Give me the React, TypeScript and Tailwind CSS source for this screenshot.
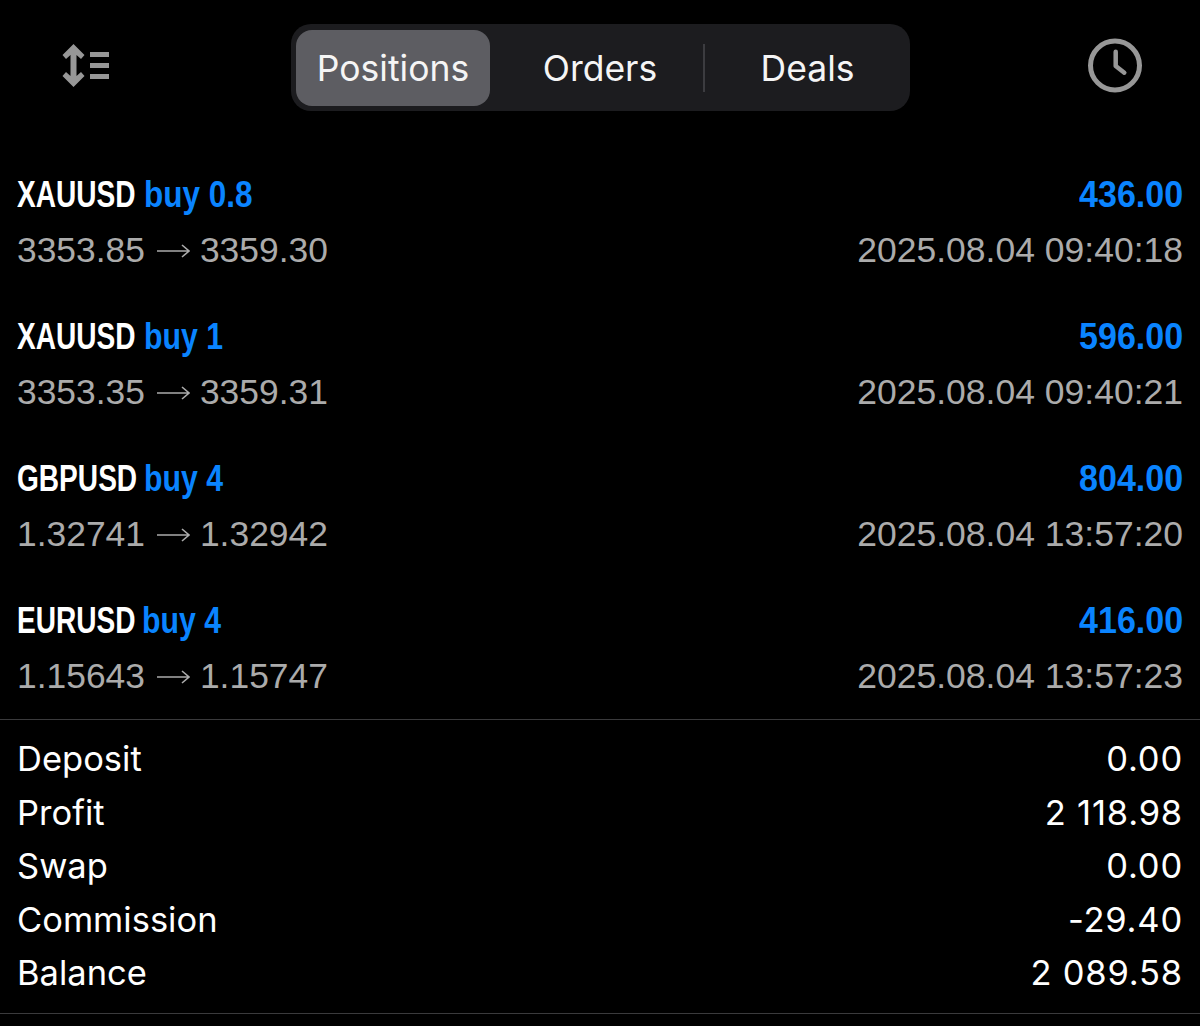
const positions = [
  { symbol: "XAUUSD", symbolBox: "w-[127px]", side: "buy 0.8", sideScale: "scale-x-[0.875]", from: "3353.85", to: "3359.30", profit: "436.00", time: "2025.08.04 09:40:18" },
  { symbol: "XAUUSD", symbolBox: "w-[127px]", side: "buy 1", sideScale: "scale-x-[0.84]", from: "3353.35", to: "3359.31", profit: "596.00", time: "2025.08.04 09:40:21" },
  { symbol: "GBPUSD", symbolBox: "w-[127px]", side: "buy 4", sideScale: "scale-x-[0.84]", from: "1.32741", to: "1.32942", profit: "804.00", time: "2025.08.04 13:57:20" },
  { symbol: "EURUSD", symbolBox: "w-[125px]", side: "buy 4", sideScale: "scale-x-[0.84]", from: "1.15643", to: "1.15747", profit: "416.00", time: "2025.08.04 13:57:23" },
];

const summary = [
  ["Deposit", "0.00"],
  ["Profit", "2 118.98"],
  ["Swap", "0.00"],
  ["Commission", "-29.40"],
  ["Balance", "2 089.58"],
];

const SortIcon = () => (
  <svg width="50" height="44" viewBox="0 0 50 44" fill="#979797">
    <path d="M12.5 0 L23.5 11 L20 15 L15.5 11 V32 L20 28 L23.5 32 L12.5 43 L1.5 32 L5 28 L9.5 32 V11 L5 15 L1.5 11 Z" />
    <rect x="29" y="8" width="19" height="5" />
    <rect x="29" y="19" width="19" height="5" />
    <rect x="29" y="30" width="19" height="5" />
  </svg>
);

const ClockIcon = () => (
  <svg width="56" height="56" viewBox="0 0 56 56" fill="none" stroke="#979797">
    <circle cx="28" cy="27.5" r="24.5" strokeWidth="5" />
    <path d="M28.7 13.7 V28 L37.3 34.7" strokeWidth="4.5" strokeLinecap="round" strokeLinejoin="round" />
  </svg>
);

const Arrow = () => (
  <svg width="33" height="16" viewBox="0 0 33 16" fill="none" stroke="#ababab" strokeWidth="1.6" className="ml-3 mr-2.5 shrink-0">
    <path d="M0 8 H32 M25 2 L32 8 L25 14" />
  </svg>
);

const App = () => {
  return (
    <div className="h-[1026px] w-[1200px] overflow-hidden bg-black font-['Inter','Liberation_Sans',sans-serif] text-white">
      <header className="flex h-[167px] items-start pt-6">
        <div className="flex w-[291px] justify-start pl-[61px] pt-5">
          <SortIcon />
        </div>
        <nav className="flex h-[87px] w-[619px] items-center rounded-[20px] bg-[#1c1c1f] pl-[5px] text-[35.5px] text-[#f5f5f5]">
          <div className="flex h-[76px] w-[194px] items-center justify-center rounded-2xl bg-[#5d5d62] pt-0.5">Positions</div>
          <div className="flex h-[76px] w-[213px] items-center justify-center pl-[7px] pt-0.5">Orders</div>
          <div className="h-[48px] w-0.5 bg-[#3c3c40]" />
          <div className="flex h-[76px] flex-1 items-center justify-center pt-0.5">Deals</div>
        </nav>
        <div className="flex flex-1 justify-end pr-[57px] pt-[14px]">
          <ClockIcon />
        </div>
      </header>

      <ul className="flex flex-col gap-[30px] px-[17px] pb-[14px]">
        {positions.map((position, index) => (
          <li key={index}>
            <div className="flex h-14 items-center justify-between font-['Liberation_Sans',sans-serif] text-[36px] font-bold">
              <div className="flex items-center whitespace-nowrap">
                <div className={position.symbolBox}>
                  <span className="inline-block origin-left scale-x-[0.78]">{position.symbol}</span>
                </div>
                <span className={`inline-block origin-left text-[#0a84ff] ${position.sideScale}`}>{position.side}</span>
              </div>
              <span className="inline-block origin-right scale-x-[0.945] text-[#0a84ff]">{position.profit}</span>
            </div>
            <div className="flex h-14 items-center justify-between font-['Liberation_Sans',sans-serif] text-[#ababab]">
              <span className="flex items-center text-[35.4px]">
                {position.from}
                <Arrow />
                {position.to}
              </span>
              <span className="text-[35.5px]">{position.time}</span>
            </div>
          </li>
        ))}
      </ul>

      <section className="border-y border-[#3a3a3c] px-[17px] py-[12.5px] text-[34.5px]">
        {summary.map(([label, value]) => (
          <div key={label} className="flex h-[53.5px] items-center justify-between">
            <span>{label}</span>
            <span className="tracking-[0.8px]">{value}</span>
          </div>
        ))}
      </section>
    </div>
  );
};

export default App;
